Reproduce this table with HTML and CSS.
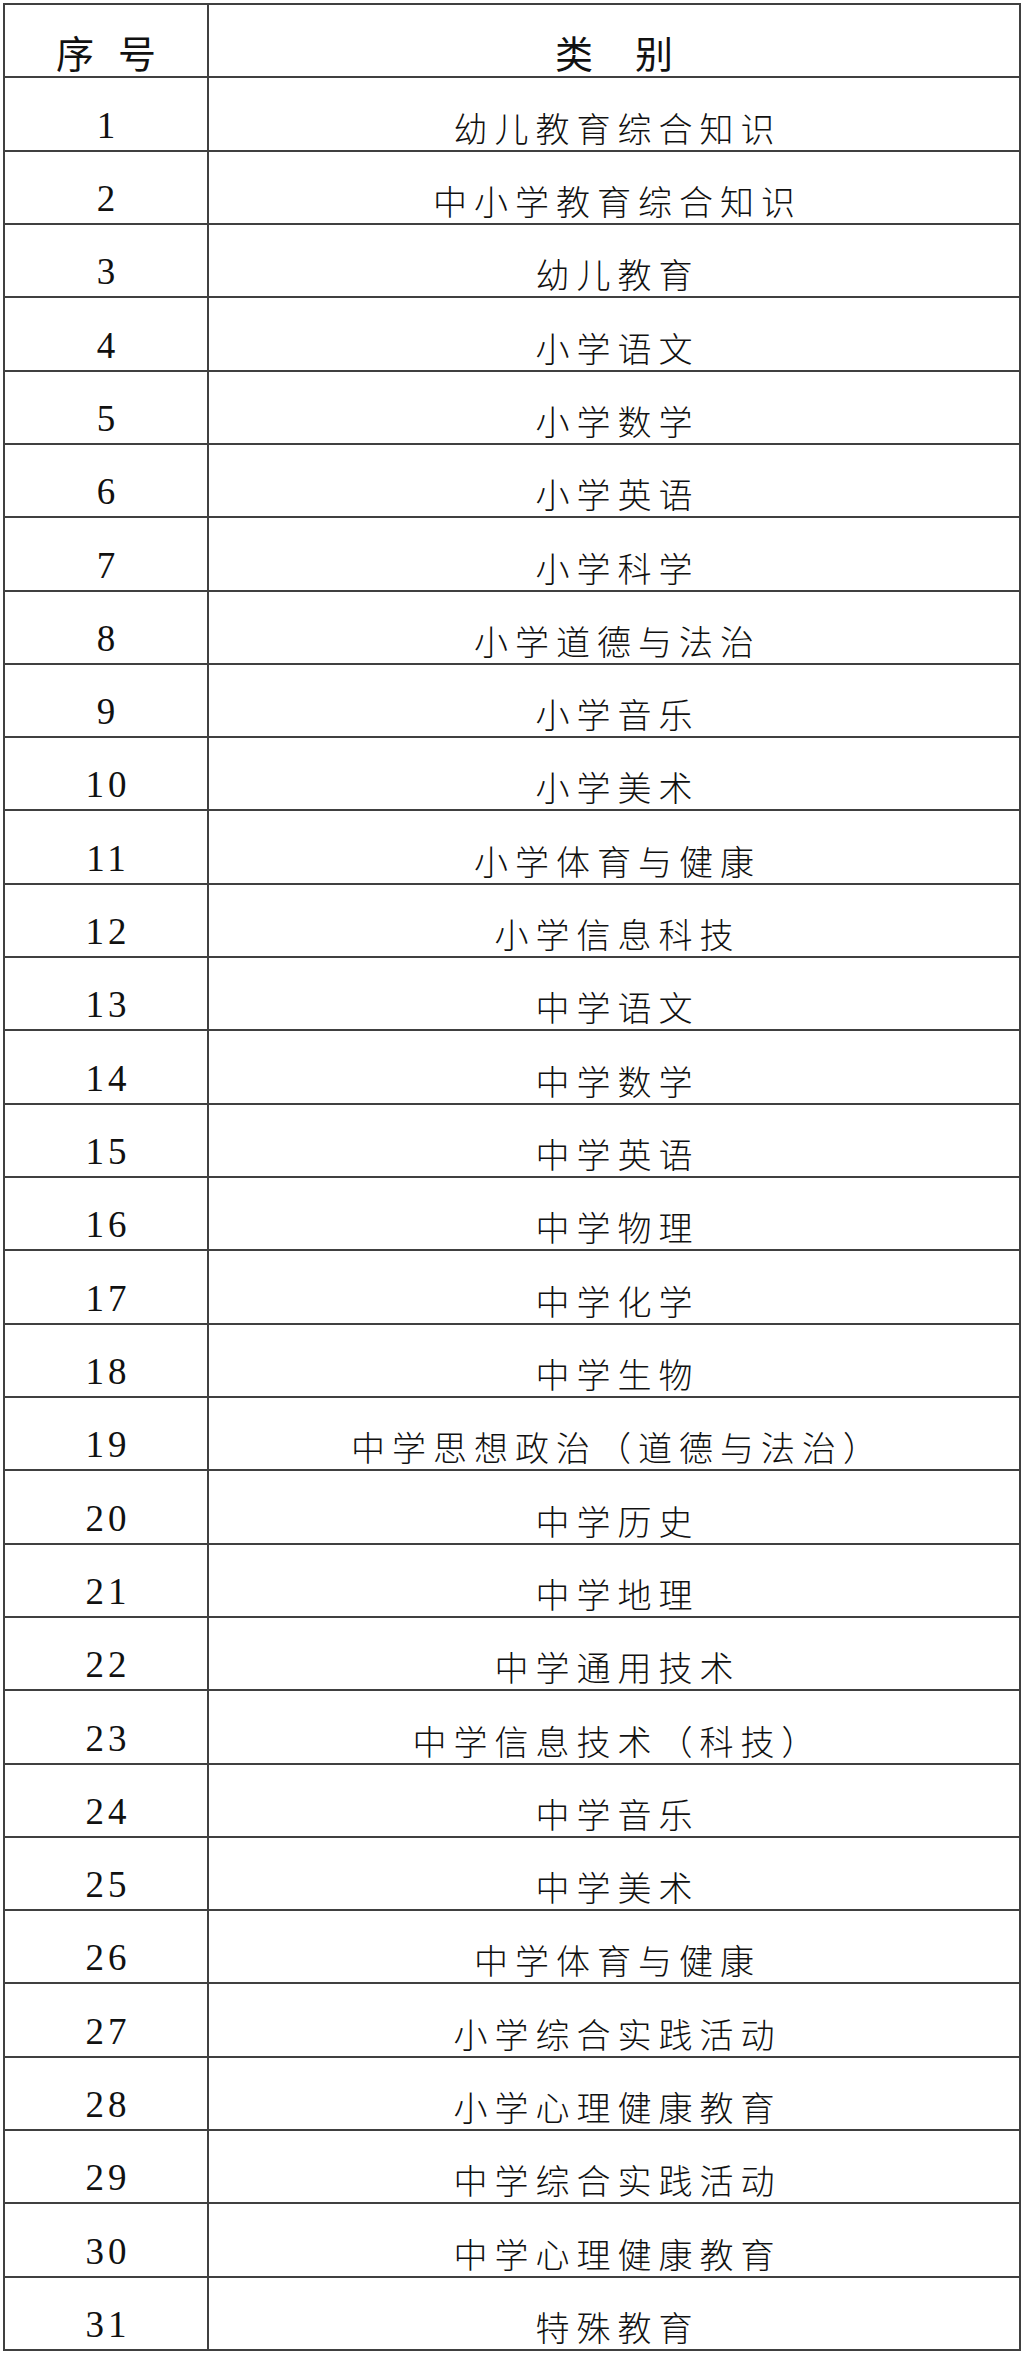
FILE: index.html
```html
<!DOCTYPE html>
<html lang="zh-CN">
<head>
<meta charset="utf-8">
<title>类别表</title>
<link rel="stylesheet" href="styles.css">
</head>
<body>
<div class="table">
  <div class="cell head"><span>序</span><span>号</span></div>
  <div class="cell head wide"><span>类</span><span>别</span></div>
  <div class="cell num">1</div><div class="cell name">幼儿教育综合知识</div>
  <div class="cell num">2</div><div class="cell name">中小学教育综合知识</div>
  <div class="cell num">3</div><div class="cell name">幼儿教育</div>
  <div class="cell num">4</div><div class="cell name">小学语文</div>
  <div class="cell num">5</div><div class="cell name">小学数学</div>
  <div class="cell num">6</div><div class="cell name">小学英语</div>
  <div class="cell num">7</div><div class="cell name">小学科学</div>
  <div class="cell num">8</div><div class="cell name">小学道德与法治</div>
  <div class="cell num">9</div><div class="cell name">小学音乐</div>
  <div class="cell num">10</div><div class="cell name">小学美术</div>
  <div class="cell num">11</div><div class="cell name">小学体育与健康</div>
  <div class="cell num">12</div><div class="cell name">小学信息科技</div>
  <div class="cell num">13</div><div class="cell name">中学语文</div>
  <div class="cell num">14</div><div class="cell name">中学数学</div>
  <div class="cell num">15</div><div class="cell name">中学英语</div>
  <div class="cell num">16</div><div class="cell name">中学物理</div>
  <div class="cell num">17</div><div class="cell name">中学化学</div>
  <div class="cell num">18</div><div class="cell name">中学生物</div>
  <div class="cell num">19</div><div class="cell name">中学思想政治（道德与法治）</div>
  <div class="cell num">20</div><div class="cell name">中学历史</div>
  <div class="cell num">21</div><div class="cell name">中学地理</div>
  <div class="cell num">22</div><div class="cell name">中学通用技术</div>
  <div class="cell num">23</div><div class="cell name">中学信息技术（科技）</div>
  <div class="cell num">24</div><div class="cell name">中学音乐</div>
  <div class="cell num">25</div><div class="cell name">中学美术</div>
  <div class="cell num">26</div><div class="cell name">中学体育与健康</div>
  <div class="cell num">27</div><div class="cell name">小学综合实践活动</div>
  <div class="cell num">28</div><div class="cell name">小学心理健康教育</div>
  <div class="cell num">29</div><div class="cell name">中学综合实践活动</div>
  <div class="cell num">30</div><div class="cell name">中学心理健康教育</div>
  <div class="cell num">31</div><div class="cell name">特殊教育</div>
</div>
</body>
</html>
```
FILE: styles.css
```css
html, body {
  margin: 0;
  padding: 0;
  background: #ffffff;
}

body {
  padding: 3px 0 0 3px;
}

.table {
  display: grid;
  grid-template-columns: 204px 1fr;
  grid-template-rows: repeat(32, 1fr);
  width: 1018px;
  height: 2348px;
  box-sizing: border-box;
  border-top: 2px solid #404040;
  border-left: 2px solid #404040;
  color: #111111;
}

.cell {
  display: flex;
  align-items: flex-end;
  justify-content: center;
  border-right: 2px solid #404040;
  border-bottom: 2px solid #404040;
  line-height: 1;
  white-space: nowrap;
}

.head {
  font-family: "Noto Sans CJK SC", sans-serif;
  font-size: 38px;
  font-weight: 400;
  gap: 24px;
  padding-bottom: 5px;
}

.head.wide {
  gap: 42px;
}

.num {
  font-family: "Liberation Serif", "Times New Roman", serif;
  font-size: 37px;
  letter-spacing: 4px;
  padding-left: 4px;
  padding-bottom: 6px;
}

.name {
  font-family: "Noto Sans CJK SC", sans-serif;
  font-size: 34px;
  font-weight: 300;
  letter-spacing: 7px;
  padding-left: 7px;
  padding-bottom: 5px;
}
```
